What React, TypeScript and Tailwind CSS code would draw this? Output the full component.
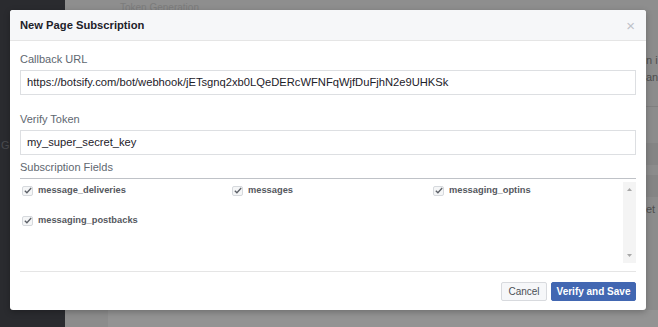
import React from "react";

function Check() {
  return (
    <span className="flex h-[10px] w-[11px] items-center justify-center rounded-[2px] border border-[#d6d9dd] bg-[#f5f6f7]">
      <svg width="8" height="7" viewBox="0 0 8 7">
        <path d="M0.8 3.8 L2.9 5.8 L7.2 1" fill="none" stroke="#5d6168" strokeWidth="1.3" />
      </svg>
    </span>
  );
}

function Field({ label }: { label: string }) {
  return (
    <div className="flex items-center gap-[5px]">
      <Check />
      <span className="text-[9.3px] font-bold text-[#55585e]">{label}</span>
    </div>
  );
}

export default function App() {
  return (
    <div
      className="relative h-[327px] w-[658px] overflow-hidden bg-[#8c8c8c]"
      style={{ fontFamily: '"Liberation Sans", Arial, sans-serif' }}
    >
      {/* background page */}
      <div className="flex h-full">
        <div className="w-[65px] bg-[#2a2b2f]">
          <div className="mt-[137px] pl-[1px] text-[11px] text-[#4a4b4f]">G</div>
        </div>
        <div className="flex flex-1 flex-col">
          <div className="h-[10px] bg-[#8e8e8e] pl-[55px] text-[10px] text-[#7c7c7c]">Token Generation</div>
          <div className="flex flex-1 flex-col items-end pr-0">
            <div className="mt-[42px] w-[12px] text-[11px] leading-[17px] text-[#4f4f4f]">
              <div>n i</div>
              <div>an</div>
            </div>
            <div className="mt-[20px] h-px w-[12px] bg-[#7f7f7f]" />
            <div className="mt-[36px] h-[22px] w-[12px] bg-[#858585]" />
            <div className="mt-[10px] h-[22px] w-[12px] bg-[#858585]" />
            <div className="mt-[4px] w-[12px] overflow-hidden whitespace-nowrap text-[11px] text-[#4f4f4f]">et</div>
          </div>
          <div className="ml-[43px] h-[17px] bg-[#939393]" />
        </div>
      </div>

      {/* modal */}
      <div className="absolute left-[10px] top-[10px] flex h-[300px] w-[636px] flex-col rounded-[3px] bg-white shadow-[0_2px_6px_rgba(0,0,0,0.25)]">
        <div className="flex h-[31px] items-center justify-between rounded-t-[3px] border-b border-[#e5e5e5] bg-[#f6f7f9] pl-[10px] pr-[11px]">
          <span className="text-[11.2px] font-bold text-[#1d2129]">New Page Subscription</span>
          <span className="text-[15px] leading-none text-[#bec2c9]">×</span>
        </div>

        <div className="flex flex-col px-[10px]">
          <div className="mt-[11px] text-[11px] leading-[14px] text-[#606770]">Callback URL</div>
          <div className="mt-[4px] flex h-[25px] items-center border border-[#dddfe2] px-[6px] text-[11.2px] text-[#1d2129]">
            https://botsify.com/bot/webhook/jETsgnq2xb0LQeDERcWFNFqWjfDuFjhN2e9UHKSk
          </div>

          <div className="mt-[17px] text-[11px] leading-[14px] text-[#606770]">Verify Token</div>
          <div className="mt-[4px] flex h-[25px] items-center border border-[#dddfe2] px-[6px] text-[11.2px] text-[#1d2129]">
            my_super_secret_key
          </div>

          <div className="mt-[5px] text-[11px] leading-[14px] text-[#606770]">Subscription Fields</div>
          <div className="mt-[4px] h-px bg-[#bfc2c7]" />

          <div className="mt-[3px] flex h-[81px]">
            <div className="flex-1 pl-[2px] pt-[2px]">
              <div className="grid grid-cols-[210px_201px_1fr] gap-y-[16px]">
                <Field label="message_deliveries" />
                <Field label="messages" />
                <Field label="messaging_optins" />
                <Field label="messaging_postbacks" />
              </div>
            </div>
            <div className="flex w-[13px] flex-col items-center justify-between bg-[#f4f4f4] py-[6px]">
              <svg width="5" height="3" viewBox="0 0 5 3">
                <path d="M0 3 L2.5 0 L5 3 Z" fill="#a8a8a8" />
              </svg>
              <svg width="5" height="3" viewBox="0 0 5 3">
                <path d="M0 0 L2.5 3 L5 0 Z" fill="#a8a8a8" />
              </svg>
            </div>
          </div>

          <div className="mt-[8px] h-px bg-[#e5e5e5]" />

          <div className="mt-[10px] flex justify-end gap-[4px]">
            <div className="flex h-[19px] w-[46px] items-center justify-center rounded-[2px] border border-[#d8dade] bg-[#f6f7f9] text-[10px] text-[#4b4f56]">
              Cancel
            </div>
            <div className="flex h-[19px] w-[85px] items-center justify-center rounded-[2px] border border-[#4267b2] bg-[#4267b2] text-[10px] font-bold text-white">
              Verify and Save
            </div>
          </div>
        </div>
      </div>
    </div>
  );
}
